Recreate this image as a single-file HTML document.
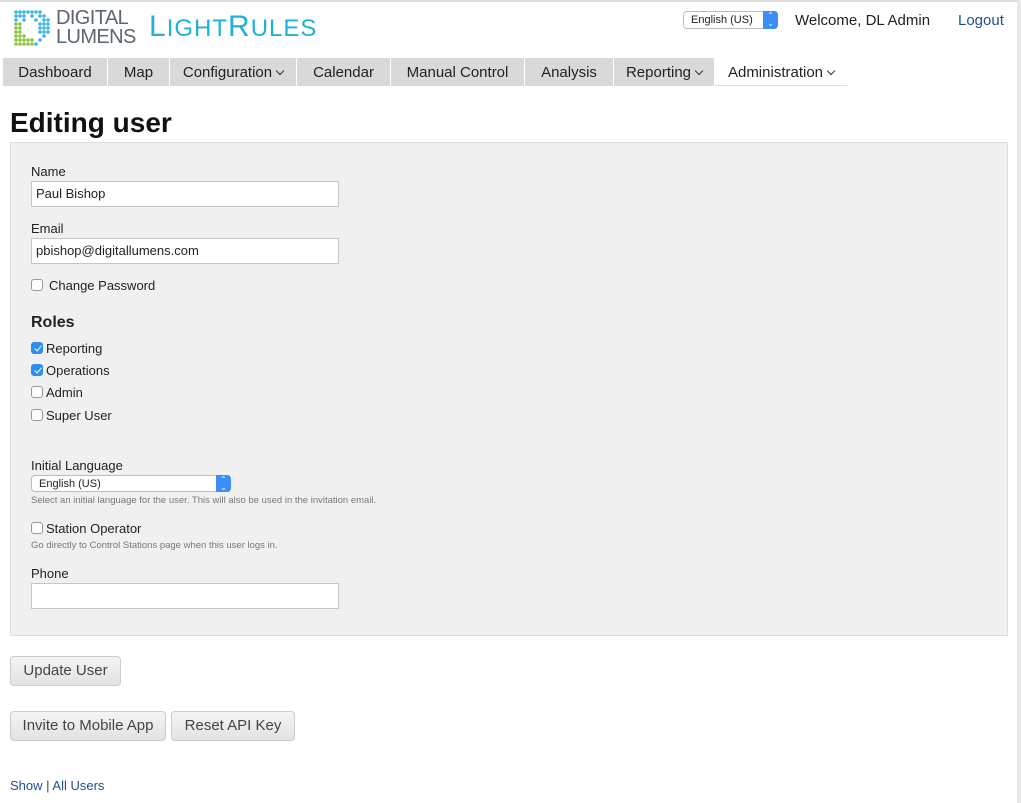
<!DOCTYPE html>
<html><head><meta charset="utf-8"><style>
*{box-sizing:border-box}
body{margin:0;width:1021px;height:803px;position:relative;background:#fff;font-family:"Liberation Sans",sans-serif;color:#222;overflow:hidden}
.a{position:absolute}
.tab{position:absolute;top:58px;height:28px;background:#d9d9d9;font-size:15px;line-height:29px;text-align:center;color:#222;border-right:1px solid #fff}
.ch{display:inline-block;width:6px;height:6px;border:solid #333;border-width:0 1.3px 1.3px 0;transform:rotate(45deg);margin-left:5px;position:relative;top:-3px}
.inp{position:absolute;left:31px;width:308px;height:26px;background:#fff;border:1px solid #c6c6c6;font-size:13px;line-height:24px;padding-left:4px}
.lbl{position:absolute;left:31px;font-size:13px;color:#222}
.cb{position:absolute;width:12px;height:12px;border:1px solid #999;border-radius:3px;background:#fff}
.cb.on{background:#2f8ff0;border-color:#2f8ff0}
.cb.on:after{content:"";position:absolute;left:3.5px;top:1px;width:3px;height:6px;border:solid #fff;border-width:0 1.6px 1.6px 0;transform:rotate(40deg)}
.btn{position:absolute;height:30px;border:1px solid #ccc;border-radius:4px;background:linear-gradient(#f4f4f4,#e2e2e2);font-size:15px;line-height:28px;text-align:center;color:#444}
.sel{position:absolute;background:#fff;border:1px solid #bbb;border-radius:4px;font-size:11px}
.sel i{position:absolute;right:-1px;top:-1px;bottom:-1px;width:15px;background:#3a8ef5;border-radius:0 4px 4px 0;color:#fff;font-style:normal;font-size:8px;text-align:center;line-height:8px;padding-top:1px}
.hint{position:absolute;left:31px;font-size:9.5px;color:#777}
a{color:#1f4f8e;text-decoration:none}
</style></head><body>
<div class="a" style="left:0;top:0;width:1021px;height:2px;background:#ddd"></div>
<div class="a" style="left:1017px;top:0;width:4px;height:803px;background:#e8e8e8"></div>
<svg class="a" style="left:13px;top:9px" width="38" height="40" viewBox="0 0 38 40">
<g fill="#3fb5e6">
<circle cx="3" cy="3" r="1.8"/><circle cx="7" cy="3" r="1.8"/><circle cx="11" cy="3" r="1.8"/><circle cx="15" cy="3" r="1.8"/><circle cx="19" cy="3" r="1.8"/><circle cx="23" cy="3" r="1.8"/><circle cx="27" cy="3" r="1.8"/>
<circle cx="3" cy="7" r="1.8"/><circle cx="7" cy="7" r="1.8"/><circle cx="11" cy="7" r="1.8"/><circle cx="19" cy="7" r="1.8"/><circle cx="27" cy="7" r="1.8"/><circle cx="31" cy="7" r="1.8"/>
<circle cx="3" cy="11" r="1.8"/><circle cx="11" cy="11" r="1.8"/><circle cx="23" cy="11" r="1.8"/><circle cx="31" cy="11" r="1.8"/><circle cx="35" cy="11" r="1.8"/>
<circle cx="27" cy="15" r="1.8"/><circle cx="31" cy="15" r="1.8"/><circle cx="35" cy="15" r="1.8"/>
<circle cx="27" cy="19" r="1.8"/><circle cx="31" cy="19" r="1.8"/><circle cx="35" cy="19" r="1.8"/>
<circle cx="27" cy="23" r="1.8"/><circle cx="31" cy="23" r="1.8"/><circle cx="35" cy="23" r="1.8"/>
<circle cx="31" cy="27" r="1.8"/><circle cx="27" cy="31" r="1.8"/><circle cx="23" cy="35" r="1.8"/>
</g>
<g fill="#8cc63f">
<circle cx="3" cy="15" r="1.8"/><circle cx="7" cy="15" r="1.8"/><circle cx="3" cy="19" r="1.8"/><circle cx="7" cy="19" r="1.8"/><circle cx="3" cy="23" r="1.8"/><circle cx="7" cy="23" r="1.8"/><circle cx="3" cy="27" r="1.8"/><circle cx="7" cy="27" r="1.8"/><circle cx="11" cy="27" r="1.8"/><circle cx="3" cy="31" r="1.8"/><circle cx="7" cy="31" r="1.8"/><circle cx="11" cy="31" r="1.8"/><circle cx="15" cy="31" r="1.8"/><circle cx="19" cy="31" r="1.8"/><circle cx="3" cy="35" r="1.8"/><circle cx="7" cy="35" r="1.8"/><circle cx="11" cy="35" r="1.8"/><circle cx="15" cy="35" r="1.8"/><circle cx="19" cy="35" r="1.8"/>
</g>
</svg>
<div class="a" style="left:56px;top:9px;font-size:20px;line-height:19px;color:#5b6670;letter-spacing:-0.6px">DIGITAL<br>LUMENS</div>
<div class="a" style="left:149px;top:10px;font-size:30px;color:#22b0d8;letter-spacing:1px;font-weight:300">L<span style="font-size:24px">IGHT</span>R<span style="font-size:24px">ULES</span></div>
<div class="sel" style="left:683px;top:11px;width:95px;height:18px;line-height:16px;padding-left:7px">English (US)<i>⌃<br>⌄</i></div>
<div class="a" style="left:795px;top:12px;font-size:15px;color:#222">Welcome, DL Admin</div>
<div class="a" style="left:958px;top:12px;font-size:15px"><a>Logout</a></div>
<div class="tab" style="left:3px;width:105px">Dashboard</div>
<div class="tab" style="left:108px;width:62px">Map</div>
<div class="tab" style="left:170px;width:127px">Configuration<span class="ch"></span></div>
<div class="tab" style="left:297px;width:94px">Calendar</div>
<div class="tab" style="left:391px;width:134px">Manual Control</div>
<div class="tab" style="left:525px;width:89px">Analysis</div>
<div class="tab" style="left:614px;width:101px">Reporting<span class="ch"></span></div>
<div class="tab" style="left:715px;width:133px;background:#fff;border-bottom:1px solid #ddd">Administration<span class="ch"></span></div>
<div class="a" style="left:10px;top:107px;font-size:28px;font-weight:bold;color:#111">Editing user</div>
<div class="a" style="left:10px;top:142px;width:998px;height:494px;background:#f0f0f0;border:1px solid #ddd"></div>
<div class="lbl" style="top:164px">Name</div>
<div class="inp" style="top:181px">Paul Bishop</div>
<div class="lbl" style="top:221px">Email</div>
<div class="inp" style="top:238px">pbishop@digitallumens.com</div>
<div class="cb" style="left:31px;top:279px"></div>
<div class="lbl" style="left:49px;top:278px">Change Password</div>
<div class="a" style="left:31px;top:314px;font-size:16px;font-weight:bold;color:#222">Roles</div>
<div class="cb on" style="left:31px;top:342px"></div><div class="lbl" style="left:46px;top:341px">Reporting</div>
<div class="cb on" style="left:31px;top:364px"></div><div class="lbl" style="left:46px;top:363px">Operations</div>
<div class="cb" style="left:31px;top:386px"></div><div class="lbl" style="left:46px;top:385px">Admin</div>
<div class="cb" style="left:31px;top:409px"></div><div class="lbl" style="left:46px;top:408px">Super User</div>
<div class="lbl" style="top:458px">Initial Language</div>
<div class="sel" style="left:31px;top:475px;width:200px;height:17px;line-height:16px;padding-left:7px">English (US)<i>⌃<br>⌄</i></div>
<div class="hint" style="top:495px">Select an initial language for the user. This will also be used in the invitation email.</div>
<div class="cb" style="left:31px;top:522px"></div><div class="lbl" style="left:46px;top:521px">Station Operator</div>
<div class="hint" style="top:540px">Go directly to Control Stations page when this user logs in.</div>
<div class="lbl" style="top:566px">Phone</div>
<div class="inp" style="top:583px"></div>
<div class="btn" style="left:10px;top:656px;width:111px">Update User</div>
<div class="btn" style="left:10px;top:711px;width:156px">Invite to Mobile App</div>
<div class="btn" style="left:171px;top:711px;width:124px">Reset API Key</div>
<div class="a" style="left:10px;top:778px;font-size:13px;color:#444"><a>Show</a> | <a>All Users</a></div>
</body></html>
